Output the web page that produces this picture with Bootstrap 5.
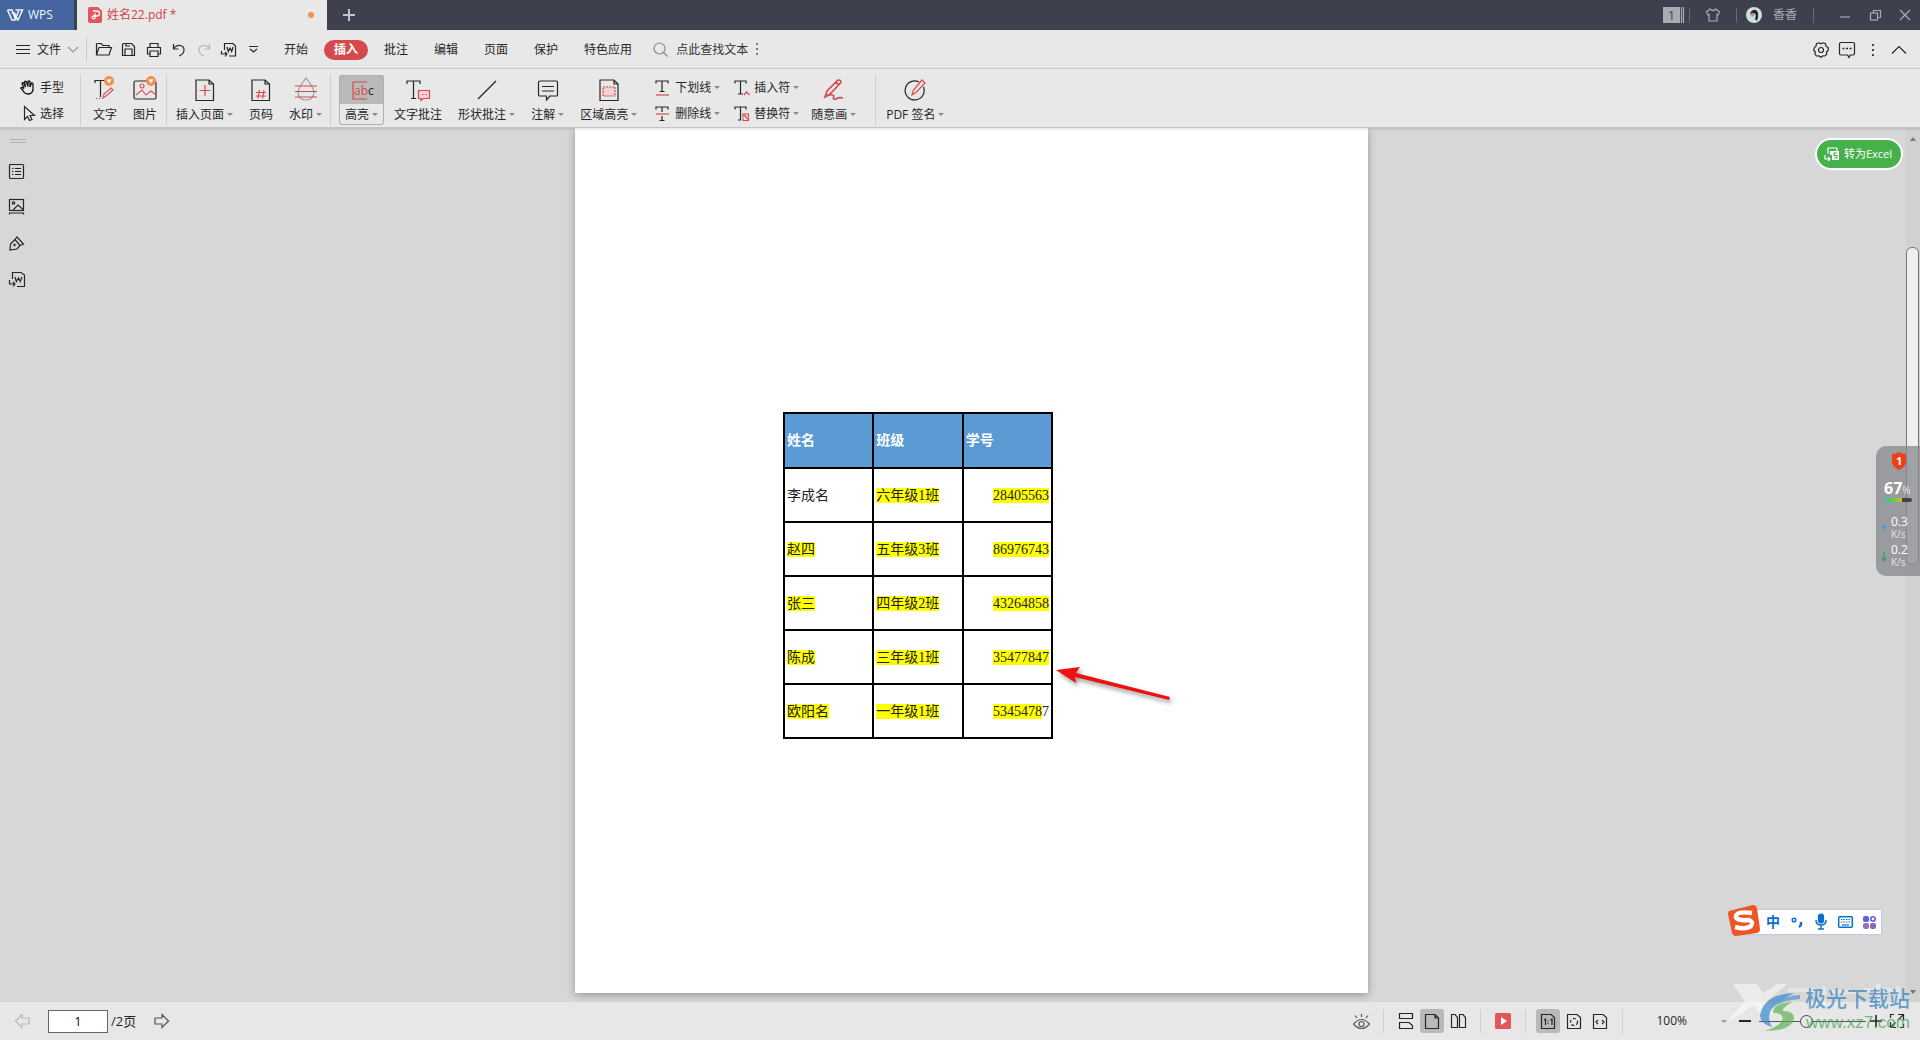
<!DOCTYPE html>
<html lang="zh-CN">
<head>
<meta charset="utf-8">
<meta name="viewport" content="width=device-width, initial-scale=1">
<title>姓名22.pdf - WPS</title>
<link href="https://cdn.jsdelivr.net/npm/bootstrap@5.3.0/dist/css/bootstrap.min.css" rel="stylesheet">
<style>
body{font-family:"Open Sans","Noto Sans CJK SC",sans-serif;font-size:12px;line-height:16px;color:#262626;background:#d7d7d7;fill:none;stroke:currentColor;stroke-width:1.2}
svg{display:block;flex:none;overflow:visible}
button{font:inherit;color:inherit;background:none;border:0;padding:0}
button,input{line-height:16px}
.topbar{height:30px;background:#3e414d;color:#a9abb3}
.brand{width:74px;background:#4565a0;color:#f2f5fa;font-size:12px;gap:5px;padding-left:7px}
.doc-tab{width:250px;margin-left:3px;padding:0 13px 0 11px;background:#e8e8e8;color:#cf4148;gap:5px}
.dirty{width:6px;height:6px;background:#f0914e}
.vline{width:1px;align-self:center;flex:none}
.topbar .vline{height:15px;background:#666975}
.winbtn{width:30px;height:30px;padding-left:10px}
.countbox{width:17px;height:16px;background:#a9abb2;color:#3e414d;font-size:13px}
.account{gap:10px}
.menubar{height:39px;padding-top:1px;background:#e8e8e8;border-bottom:1px solid #cfcfcf}
.menubar .vline{height:24px;background:#c9c9c9}
.filemenu{gap:7px}
.quick{margin:0 5px 0 4px}
.tool{width:25px;height:24px}
.tabbtn{height:20px;padding:0 10px;margin:0 3px}
.tabbtn.on{background:#d54a4f;color:#fff;font-weight:700;border-radius:10px}
.findbox{width:76px;border:0;background:none;padding:0;color:#333;outline:0}
.findbox::placeholder{color:#333;opacity:1}
.rightico{width:26px;height:24px}
.ribbon{height:59px;padding-top:3px;background:#e8e8e8;border-bottom:1px solid #c4c4c4;box-shadow:0 1px 3px rgba(0,0,0,.15);z-index:2}
.ribbon .vline{height:52px;background:#d0d0d0}
.ribbon .sep-a{margin:0 1px}
.ribbon .sep-b{margin:0 6px 0 11px}
.rb{height:50px;padding:2px 8px 2px;gap:5px}
.rb.on{padding:2px 6px 2px;margin:0 2px 0 8px;border-radius:3px;background:linear-gradient(#b9b9b9 29px,#e8e8e8 29px);box-shadow:inset 0 0 0 1px #b0b0b0}
.drop::after{content:"";display:inline-block;margin-left:3px;vertical-align:3px;border:3px solid transparent;border-top-color:#8a8a8a;border-bottom:0}
.stk{padding:2px 0 0 10px;width:79px}
.stk.pick{width:72px;padding-left:20px}
.stk button{height:26px;gap:5px}
.side{width:33px;padding-top:11px;margin-right:4px}
.side button{height:36px}
.grip{width:16px;height:4px;border:solid #b2b2b2;border-width:1px 0;margin-left:10px;margin-bottom:10px}
.sheet{width:793px;background:#fff;margin-bottom:9px;padding:284px 0 0 208px;box-shadow:0 2px 8px rgba(0,0,0,.3)}
.roster{width:270px;table-layout:fixed;border-collapse:collapse;font-family:"Liberation Serif","Noto Sans CJK SC",serif;font-size:14px;line-height:15px;color:#222}
.roster th,.roster td{height:54px;border:2px solid #000;padding:0 2px;vertical-align:middle}
.roster th{height:55px;background:#5b9bd5;color:#fff}
.roster td:last-child{text-align:right}
.hl{background:#ff0;line-height:15px;display:inline-block;height:15px}
.arrow{position:absolute;left:1056px;top:536px;filter:drop-shadow(2px 3px 2px rgba(0,0,0,.4))}
.scroller{width:14px;background:#d1d1d1;position:relative}
.thumb{position:absolute;left:0;right:1px;top:119px;height:318px;border:1px solid #777;border-radius:6px;background:#efefef}
.scroller .up{position:absolute;left:4px;top:9px}
.scroller .dn{position:absolute;left:4px;bottom:8px}
.convert{position:absolute;right:17px;top:10px;height:32px;padding:0 9px 0 7px;gap:4px;border:2px solid #fff;border-radius:16px;background:#46b14a;color:#fff;font-size:11px}
.monitor{position:absolute;right:0;top:318px;width:44px;height:130px;border-radius:10px 0 0 10px;background:rgba(137,139,143,.78);color:#fff;padding:6px 0 0 8px}
.monitor b{font-size:16px;line-height:20px}
.monitor .pct{font-size:10px;opacity:.8}
.meter{width:28px;height:4px;margin-bottom:14px;border-radius:2px;background:linear-gradient(90deg,#32c3a2,#68cc45 35%,#d4b52b 64%,#444 65%)}
.rate{font-size:12px;line-height:12px;margin-bottom:4px;gap:4px;margin-left:-3px}
.rate small{color:#e3e3e3;font-size:10px}
.ime{position:absolute;right:39px;bottom:106px;height:24px;width:146px;padding-left:30px;background:#fff;color:#0b6fd0;box-shadow:0 0 2px #8bb5e6;gap:8px;font-weight:700;font-size:14px}
.ime .logo{position:absolute;left:-7px;top:-5px}
.ime button{width:16px;height:24px}
.status{height:38px;background:#e7e7e7;position:relative}
.pager{gap:18px;padding-left:15px}
.pagenum{gap:3px;font-size:13px}
.pagebox{width:60px;height:23px;border:1px solid #666;background:#fff;text-align:center;padding:0;font-size:12px}
.modes button{width:24px;height:24px;border-radius:3px;margin:0 1px}
.modes button.on{background:#b9b9b9}
.modes .vline{height:24px;background:#d2d2d2;margin:0 9px}
.zoomlevel{gap:34px}
.zoomer{width:107px;height:16px;appearance:none;background:linear-gradient(#555,#555) center/100% 1px no-repeat}
.zoomer::-webkit-slider-thumb{appearance:none;width:13px;height:13px;border:1px solid #444;border-radius:50%;background:#e7e7e7}
.stamp{position:absolute;right:6px;bottom:2px;pointer-events:none;width:182px;height:56px}
.stamp .cn{position:absolute;right:4px;top:4px;font-size:21px;line-height:24px;font-weight:500;color:rgba(48,125,190,.7);white-space:nowrap}
.stamp .web{position:absolute;right:4px;top:31px;font-size:17px;line-height:20px;font-family:"Liberation Sans",sans-serif;color:rgba(70,165,90,.75)}
.stamp svg{position:absolute;left:0;top:2px}
</style>
<script src="https://cdn.jsdelivr.net/npm/bootstrap@5.3.0/dist/js/bootstrap.bundle.min.js"></script>
</head>
<body class="vh-100 d-flex flex-column overflow-hidden">
<header class="topbar d-flex flex-shrink-0">
  <button class="brand d-flex align-items-center"><svg width="16" height="12" stroke-width="1.5"><path d="M.5 1H5l3.500 9.500M5 1l-.5 0M.5 1l4.500 10h3L11.500 2M4.500 4h3L10.500 11H11L15.500 1H8.500"/></svg>WPS</button>
  <div class="doc-tab d-flex align-items-center"><svg width="14" height="16" stroke="none"><path d="M2 0h8l4 4v10q0 2-2 2H2q-2 0-2-2V2q0-2 2-2" fill="#e0565e"/><path d="M5 4h4a2 2 0 0 1 0 5H7v2a1.500 1.500 0 1 1-2-2h2V6" stroke="#fff" stroke-width="1.300"/></svg><span>姓名22.pdf *</span><i class="dirty rounded-circle ms-auto"></i></div>
  <button class="ms-3" aria-label="新建"><svg width="12" height="12" stroke="#c4c5ca" stroke-width="2"><path d="M0 6h12M6 0v12"/></svg></button>
  <div class="d-flex ms-auto align-items-center">
    <span class="countbox d-flex align-items-center justify-content-center">1</span><svg class="me-1" width="5" height="16"><path d="M1.500 0v16M3.500 0v16"/></svg><i class="vline"></i>
    <button class="px-3" aria-label="皮肤"><svg width="14" height="14"><path d="M4 1 .5 4 2 7l1-.5V13h8V6.500l1 .5 1.500-3L10 1Q7 4 4 1Z"/></svg></button><i class="vline"></i>
    <span class="account d-flex align-items-center ms-2 me-3"><svg width="18" height="18" stroke="none"><circle cx="9" cy="9" r="8" fill="#cfdee1"/><path d="M5 8q2-5 6-4 4 3 1 11l-2-2 1-4-2-2Z" fill="#26262d"/><path d="m5 9 4-2 1 2-3 2Z" fill="#c58b79"/></svg>香香</span><i class="vline me-3"></i>
    <button class="winbtn" aria-label="最小化"><svg width="10" height="10"><path d="M0 7h10"/></svg></button>
    <button class="winbtn" aria-label="还原"><svg width="11" height="11"><rect x=".5" y="3" width="7" height="7"/><path d="M3.500 3V.5h7v7h-3"/></svg></button>
    <button class="winbtn" aria-label="关闭"><svg width="10" height="10"><path d="m0 0 10 10M10 0 0 10"/></svg></button>
  </div>
</header>
<nav class="menubar d-flex align-items-center flex-shrink-0">
  <button class="filemenu d-flex align-items-center ms-3"><svg width="14" height="10"><path d="M0 .5h14M0 4.500h14M0 8.500h14"/></svg><span>文件</span><svg width="10" height="6" stroke="#999"><path d="m0 0 5 5 5-5"/></svg></button>
  <i class="vline ms-2"></i>
  <div class="quick d-flex">
    <button class="tool d-grid" aria-label="打开"><svg class="m-auto" width="16" height="13"><path d="M.5 12V1.500Q.5.5 1.500.5H5L7 2.500h6v2M.5 12 3 4.500h12.500L13 12Z"/></svg></button>
    <button class="tool d-grid" aria-label="保存"><svg class="m-auto" width="13" height="13"><path d="M1.500.5h8l3 3v9H.5V1.500ZM3 12V6h7v6M4 .5V3h4"/></svg></button>
    <button class="tool d-grid" aria-label="打印"><svg class="m-auto" width="14" height="14"><path d="M3 4V.5h8V4M3 11H.5V4.500h13V11H11M3 8h8v5.500H3Z"/></svg></button>
    <button class="tool d-grid" aria-label="撤销"><svg class="m-auto" width="12" height="12"><path d="M.5 0v5h5M.5 5Q3 1 7 1.500q4 .5 4 4.500T6 12"/></svg></button>
    <button class="tool d-grid" aria-label="恢复"><svg class="m-auto" width="12" height="12" stroke="#b9b9b9"><path d="M11.500 0v5h-5M11.500 5Q9 1 5 1.500 1 2 1 6t5 6"/></svg></button>
    <button class="tool d-grid" aria-label="转为Word"><svg class="m-auto" width="15" height="14"><path d="M3.500 7V.5H12L14.500 3v10H8M6 4l1.300 4.500L9 5l1.700 3.500L12 4M.5 8v3h5M4 9l2 2-2 2.500"/></svg></button>
    <button class="tool d-grid" aria-label="更多"><svg class="m-auto" width="9" height="7"><path d="M0 .5h9M1 3l3.500 3L8 3"/></svg></button>
  </div>
  <button class="tabbtn">开始</button><button class="tabbtn on">插入</button><button class="tabbtn">批注</button><button class="tabbtn">编辑</button><button class="tabbtn">页面</button><button class="tabbtn">保护</button><button class="tabbtn">特色应用</button>
  <label class="d-flex align-items-center ms-2"><svg class="me-2" width="15" height="15" stroke="#888"><circle cx="6.500" cy="6.500" r="5.500"/><path d="m10.500 10.500 4 4"/></svg><input class="findbox" type="text" placeholder="点此查找文本" aria-label="查找文本"></label>
  <svg class="ms-1" width="3" height="13" stroke="none" fill="#777"><path d="M0 0h2v2H0zM0 5h2v2H0zM0 10h2v2H0z"/></svg>
  <div class="d-flex ms-auto me-2">
    <button class="rightico d-grid" aria-label="设置"><svg class="m-auto" width="16" height="16"><path d="m6 .8 2 1 2-1 2.500 1 .5 2.400 2.200 1.300v3L13.500 10l.2 2.500-2 1.500-2-.2L8 15.500l-2-1.700-2.500.2-1.500-2L2.300 10 .6 8l.8-2.500L3 4.200l.5-2.400Z"/><circle cx="8" cy="8" r="2.500"/></svg></button>
    <button class="rightico d-grid" aria-label="反馈"><svg class="m-auto" width="16" height="16"><path d="M2 .5h12q1.500 0 1.500 1.500v9.500q0 1.500-1.500 1.500h-3l-1 2.500L8.500 13H2Q.5 13 .5 11.500V2Q.5.5 2 .5Z"/><path d="M3.500 6.500h2M7 6.500h2m1.500 0h2" stroke-width="1.600"/></svg></button>
    <button class="rightico d-grid" aria-label="菜单"><svg class="m-auto" width="2" height="12" stroke="none" fill="#444"><path d="M0 0h2v2H0zM0 5h2v2H0zM0 10h2v2H0z"/></svg></button>
    <button class="rightico d-grid" aria-label="收起"><svg class="m-auto" width="14" height="8"><path d="m0 7.500 7-7 7 7"/></svg></button>
  </div>
</nav>
<div class="ribbon d-flex align-items-center flex-shrink-0 text-nowrap">
  <div class="stk pick">
    <button class="d-flex align-items-center"><svg width="15" height="15" stroke="#111" stroke-width="1.300"><path d="M4 8 2 3.500q1-1.500 2 0L5.500 7 4.500 2q1-1.500 2 0L8 6.500V1.500q1-1 2 0V7l1.500-4q1.500-.5 1.500 1.500L13 10q-1 4-5 4-3 0-4-2L.8 8q1-1.500 3.200 1"/></svg>手型</button>
    <button class="d-flex align-items-center"><svg class="ms-1" width="11" height="15"><path d="M.5.5v13l3-3 2 4 2.500-1-2-4h4.500Z"/></svg>选择</button>
  </div>
  <i class="vline ms-2 me-1"></i>
  <button class="rb d-flex flex-column align-items-center"><svg width="22" height="25"><path d="M1 6V3.500h11M6.500 3.500V20"/><path d="m9 21 1-4 7-6 2 2-7 6Z" stroke="#d9555d"/><path d="M2 21.500h7" stroke="#d9555d" stroke-dasharray="1.500"/><circle cx="15" cy="4" r="5" fill="#f0914e" stroke="none"/><path d="m12.500 2.500 5-.2L15 6.500Z" fill="#fff" stroke="none"/></svg>文字</button>
  <button class="rb d-flex flex-column align-items-center"><svg width="22" height="25"><rect x="0" y="4" width="22" height="18" rx="1.500"/><circle cx="8" cy="9" r="2" stroke="#d9555d"/><path d="m2 18 6-5 4 5 5-4 5 4" stroke="#d9555d"/><circle cx="17" cy="4" r="5" fill="#f0914e" stroke="none"/><path d="m14.500 2.500 5-.2L17 6.500Z" fill="#fff" stroke="none"/></svg>图片</button>
  <i class="vline sep-a"></i>
  <button class="rb d-flex flex-column align-items-center"><svg width="20" height="25"><path d="M1 3h13l4.500 4v16.500H1ZM14 3v4h4.500"/><path d="M4.500 13.500h11M10 8v11" stroke="#d54a4f"/></svg><span class="drop">插入页面</span></button>
  <button class="rb d-flex flex-column align-items-center"><svg width="20" height="25"><path d="M1 3h13l4.500 4v16.500H1ZM14 3v4h4.500"/><path d="M5 15.500h10M5 19h10M8.500 13 7 21.500M13 13l-1.500 8.500" stroke="#d54a4f"/></svg>页码</button>
  <button class="rb d-flex flex-column align-items-center"><svg width="22" height="25"><path d="M11 1Q3 11 3 16q1 7 8 7t8-7Q19 11 11 1Z" stroke="#999"/><path d="M0 9h22M0 14.500h22M0 20h22" stroke="#d54a4f"/></svg><span class="drop">水印</span></button>
  <i class="vline"></i>
  <button class="rb on d-flex flex-column align-items-center"><svg width="22" height="25"><path d="M16 5H2v17h14" stroke="#d54a4f"/><text x="3" y="18" font-size="12" stroke="none" fill="#d54a4f">ab<tspan fill="#222">c</tspan></text></svg><span class="drop">高亮</span></button>
  <button class="rb d-flex flex-column align-items-center"><svg width="24" height="25"><path d="M1 7V4h13v3M7.500 4v17.500M5 21.500h5"/><path d="M12.500 13.500h11v8h-6l-2.500 2v-2h-2.500Z" stroke="#d54a4f" fill="#f3d2d3"/><path d="M16 17.500h1.500m2 0H21" stroke="#d54a4f"/></svg>文字批注</button>
  <button class="rb d-flex flex-column align-items-center"><svg width="20" height="25"><path d="m1 22 18-18"/></svg><span class="drop">形状批注</span></button>
  <button class="rb d-flex flex-column align-items-center"><svg width="20" height="25"><path d="M2 4h16.500q1 0 1 1v13q0 1-1 1H12l-3.500 4v-4H2q-1.500 0-1.500-1V5q0-1 1.500-1ZM4 9.500h12M4 14h12"/></svg><span class="drop">注解</span></button>
  <button class="rb d-flex flex-column align-items-center"><svg width="20" height="25"><path d="M1 3h14l4 4v16.500H1ZM15 3v4h4"/><rect x="4" y="10" width="12" height="9" stroke="#d54a4f" fill="#f3d2d3" stroke-dasharray="2 1"/></svg><span class="drop">区域高亮</span></button>
  <div class="stk">
    <button class="d-flex align-items-center"><svg width="15" height="16"><path d="M1 3.500V1h12v2.500M7 1v10.500M4.500 11.500h5"/><path d="M1 15h13" stroke="#d54a4f"/></svg><span class="drop">下划线</span></button>
    <button class="d-flex align-items-center"><svg width="15" height="16"><path d="M1 3.500V1h12v2.500M7 1v5M7 10v4.500M4.500 14.500h5"/><path d="M1 8h13" stroke="#d54a4f"/></svg><span class="drop">删除线</span></button>
  </div>
  <div class="stk">
    <button class="d-flex align-items-center"><svg width="15" height="16"><path d="M1 3.500V1h11v2.500M6.500 1v13M4 14h5"/><path d="m10 15 2.500-3 3 3" stroke="#d54a4f"/></svg><span class="drop">插入符</span></button>
    <button class="d-flex align-items-center"><svg width="15" height="16"><path d="M1 3.500V1h11v2.500M6.500 1v13M4 14h3"/><path d="M9 11V8h5.500v3M9 11.500v3h5.500v-3M10 9l4 4" stroke="#d54a4f"/></svg><span class="drop">替换符</span></button>
  </div>
  <button class="rb d-flex flex-column align-items-center"><svg width="20" height="25" stroke="#d54a4f" stroke-width="1.600"><path d="m1 20 2-6L14 3q3-.5 3 2.500L6 17ZM12 5l3 3M1 20q7-4 9-1-2 4 2 3 3-2 7-1"/></svg><span class="drop">随意画</span></button>
  <i class="vline sep-b"></i>
  <button class="rb ps-1 d-flex flex-column align-items-center"><svg width="22" height="25"><path d="M15 5a9.500 9.500 0 1 0 4.500 5"/><path d="m8 18 1.500-5L18 3l3 3-9 9.500Z" stroke="#d54a4f"/></svg><span class="drop">PDF 签名</span></button>
</div>
<main class="flex-grow-1 d-flex position-relative">
  <aside class="side d-flex flex-column">
    <div class="grip"></div>
    <button class="d-grid" aria-label="目录"><svg class="m-auto" width="15" height="15"><rect x=".5" y=".5" width="14" height="14" rx="1"/><path d="M3 4.500h1.500M3 7.500h1.500M3 10.500h1.500M6 4.500h6M6 7.500h6M6 10.500h6"/></svg></button>
    <button class="d-grid" aria-label="缩略图"><svg class="m-auto" width="15" height="16"><rect x=".5" y=".5" width="14" height="11"/><circle cx="4.500" cy="4" r="1.200"/><path d="m4 11 5-5 5.500 5M.5 15.500v-1.500h14v1.500"/></svg></button>
    <button class="d-grid" aria-label="签名"><svg class="m-auto" width="15" height="15"><path d="M1 14 1.500 8 6 3.500l5 6L8 13Zm5-10.500L8 1l6.500 7-3.500 1.500"/><circle cx="5.500" cy="9" r=".6"/></svg></button>
    <button class="d-grid" aria-label="转换"><svg class="m-auto" width="16" height="15"><path d="M3.500 7V.5H12L15.500 3v11.500H8M6 5l1.300 4.500L9.500 6l1.700 3.500L13 5M.5 8v4h5M4 10l2 2-2 2.500"/></svg></button>
  </aside>
  <div class="flex-grow-1 d-flex justify-content-center">
    <article class="sheet">
      <table class="roster">
        <thead><tr><th>姓名</th><th>班级</th><th>学号</th></tr></thead>
        <tbody>
          <tr><td>李成名</td><td><span class="hl">六年级1班</span></td><td><span class="hl">28405563</span></td></tr>
          <tr><td><span class="hl">赵四</span></td><td><span class="hl">五年级3班</span></td><td><span class="hl">86976743</span></td></tr>
          <tr><td><span class="hl">张三</span></td><td><span class="hl">四年级2班</span></td><td><span class="hl">43264858</span></td></tr>
          <tr><td><span class="hl">陈成</span></td><td><span class="hl">三年级1班</span></td><td><span class="hl">35477847</span></td></tr>
          <tr><td><span class="hl">欧阳名</span></td><td><span class="hl">一年级1班</span></td><td><span class="hl">5345478</span>7</td></tr>
        </tbody>
      </table>
    </article>
  </div>
  <svg class="arrow" width="118" height="40" stroke="none"><path d="M0 6 24 3 20 9 114 33 113 36 19 13 20 19Z" fill="#ee1111"/></svg>
  <div class="scroller"><svg class="up" width="6" height="4" stroke="none" fill="#777"><path d="m0 4 3-4 3 4Z"/></svg><div class="thumb"></div><svg class="dn" width="6" height="4" stroke="none" fill="#777"><path d="m0 0 3 4 3-4Z"/></svg></div>
  <button class="convert d-flex align-items-center"><svg width="16" height="15"><path d="M4 7V1h9v3M1 8v4h5M4 10l2 2-2 2"/><path d="M6 4h9v9H8V8H6Z" fill="#fff" stroke="none"/><path d="M13 6h-3v2.500h3V11h-3" stroke="#46b14a"/></svg>转为Excel</button>
  <div class="monitor">
    <svg class="ms-2" width="14" height="18" stroke="none"><path d="M7 0q3 2 7 2v9q-1 4-7 7-6-3-7-7V2q4 0 7-2" fill="#ee4018"/><text x="4" y="13" font-size="11" font-weight="700" fill="#fff">1</text></svg>
    <div class="mt-2 lh-1 text-nowrap"><b>67</b><span class="pct">%</span></div>
    <div class="meter"></div>
    <div class="rate d-flex align-items-center"><svg width="6" height="12" stroke="#3aa0d8"><path d="m1 6 2-3 2 3M3 3v7"/></svg><div>0.3<br><small>K/s</small></div></div>
    <div class="rate d-flex align-items-center"><svg width="6" height="12" stroke="#22a666"><path d="m1 8 2 3 2-3M3 2v9"/></svg><div>0.2<br><small>K/s</small></div></div>
  </div>
</main>
<footer class="status d-flex align-items-center flex-shrink-0">
  <div class="pager d-flex align-items-center">
    <button aria-label="上一页"><svg width="15" height="14" stroke="#bbb"><path d="M.5 7 7 .5V4h7v6H7v3.500Z"/></svg></button>
    <label class="pagenum d-flex align-items-center"><input class="pagebox" type="text" value="1" aria-label="页码">/2页</label>
    <button aria-label="下一页"><svg width="15" height="14" stroke="#555"><path d="M14.500 7 8 .5V4H1v6h7v3.500Z"/></svg></button>
  </div>
  <div class="modes d-flex align-items-center ms-auto">
    <button class="d-grid" aria-label="护眼"><svg class="m-auto" width="17" height="15" stroke="#555"><path d="M.5 10q8-9 16 0-8 9-16 0M8.500 0v3M2 1.500 4 4M15 1.500 13 4"/><circle cx="8.500" cy="10" r="2.500"/></svg></button><i class="vline"></i>
    <button class="d-grid" aria-label="连续"><svg class="m-auto" width="14" height="16"><path d="M.5.5h13v5H.5ZM.5 15.500v-6H10l3.500 3v3Z"/></svg></button>
    <button class="on d-grid" aria-label="单页"><svg class="m-auto" width="14" height="15"><path d="M.5.5H10l3.500 3.500v10.500H.5ZM10 .5V4h3.500"/></svg></button>
    <button class="d-grid" aria-label="双页"><svg class="m-auto" width="15" height="14"><path d="M.5.5H4l2.500 3v10h-6Zm8 0H12l2.500 3v10h-6Z"/></svg></button><i class="vline"></i>
    <button class="d-grid" aria-label="播放"><svg class="m-auto" width="16" height="16" stroke="none"><rect width="16" height="16" rx="1.500" fill="#e5565a"/><path d="m6 4 6 4-6 4Z" fill="#fff"/></svg></button><i class="vline"></i>
    <button class="on d-grid" aria-label="实际大小"><svg class="m-auto" width="14" height="15"><path d="M.5.5H10l3.500 3v11H.5ZM3 6l1.500-1v6M9.500 6 11 5v6M7 6.500v1M7 9v1"/></svg></button>
    <button class="d-grid" aria-label="适合页面"><svg class="m-auto" width="14" height="15"><path d="M.5.5H10l3.500 3v11H.5Z"/><circle cx="7" cy="8" r="3.500" stroke-dasharray="3 2"/></svg></button>
    <button class="d-grid" aria-label="适合宽度"><svg class="m-auto" width="14" height="15"><path d="M.5.5H10l3.500 3v11H.5ZM5 6 3 8l2 2M9 6l2 2-2 2"/></svg></button><i class="vline"></i>
  </div>
  <div class="zoomlevel d-flex align-items-center ms-4 me-2"><span>100%</span><svg width="6" height="3" stroke="none" fill="#999"><path d="M0 0h6L3 3Z"/></svg></div>
  <button class="ms-1" aria-label="缩小"><svg width="12" height="12" stroke-width="2"><path d="M0 6h12"/></svg></button>
  <input class="zoomer me-1 ms-2" type="range" min="0" max="100" value="44" aria-label="缩放">
  <button aria-label="放大"><svg width="12" height="12" stroke-width="1.600"><path d="M0 6h12M6 0v12"/></svg></button>
  <button class="ms-2 me-3 pe-0" aria-label="全屏"><svg width="14" height="14"><path d="M8 .5h5.500V6M6 13.500H.5V8M13.500.5l-5 5M.5 13.500l5-5M.5 4V.5H4M10 13.500h3.500V10"/></svg></button>
  <div class="ime d-flex align-items-center">
    <svg class="logo" width="32" height="32" stroke="none"><path d="m1 6 24-6q3 0 4 3l3 21q0 3-3 4L8 31q-3 0-4-3L0 9q0-2 1-3" fill="#ee5425"/><path d="M24 8Q9 6 8 11t13 4q5 2 2 6-5 4-16 1" stroke="#fff" stroke-width="4.500"/></svg>
    <button>中</button>
    <button class="d-grid" aria-label="标点"><svg class="m-auto" width="12" height="12"><circle cx="3" cy="4" r="1.800" stroke-width="1.500"/><path d="M10 6v2q0 2-2 3" stroke-width="2.500"/></svg></button>
    <button class="d-grid" aria-label="语音"><svg class="m-auto" width="12" height="16"><rect x="3.500" y="0" width="5" height="9" rx="2.500" fill="currentColor"/><path d="M1 6q0 5 5 5t5-5M6 11v4M3 15h6" stroke-width="1.500"/></svg></button>
    <button class="d-grid" aria-label="键盘"><svg class="m-auto" width="15" height="12"><rect x=".7" y=".7" width="13.600" height="10.600" rx="1" stroke-width="1.500"/><path d="M3 3.500h10M3 6h10" stroke-dasharray="1.500 1"/><path d="M4 9h7"/></svg></button>
    <button class="d-grid" aria-label="工具箱"><svg class="m-auto" width="13" height="13" stroke="none"><rect width="6" height="6" rx="2" fill="#5a62e8"/><circle cx="10" cy="3" r="2.200" stroke="#6656dd" stroke-width="1.600"/><rect y="7" width="6" height="6" rx="2" fill="#9a6fae"/><rect x="7" y="7" width="6" height="6" rx="2" fill="#8668b5"/></svg></button>
  </div>
  <div class="stamp">
    <svg width="174" height="52" stroke="none"><path d="M1 0h24l6 9L45 0h10L35 17l11 13H28l-6-9Q10 30-6 38L13 18Z" fill="#fff" opacity=".5"/><path d="M56 4h28v4H56zM90 2h4v20h-4zM98 6h28v4H98zM132 4h30v4h-30zM144 0h4v20h-4zM164 2h4v20h-4z" fill="#fff" opacity=".35"/><path d="M62 9Q32 10 28 31q0 9 12 12-8-14 6-24 7-5 16-10" fill="#3788c8" opacity=".7"/><path d="M61 18q-21 1-20 11 12 0 9 8-4 6-17 10 27 0 29-13 0-7-11-7 0-5 10-9" fill="#5eaf52" opacity=".7"/><path d="M68 11q-17 0-26 12 10-7 26-8Z" fill="#3788c8" opacity=".6"/></svg>
    <span class="cn">极光下载站</span><span class="web">www.xz7.com</span>
  </div>
</footer>
</body>
</html>
